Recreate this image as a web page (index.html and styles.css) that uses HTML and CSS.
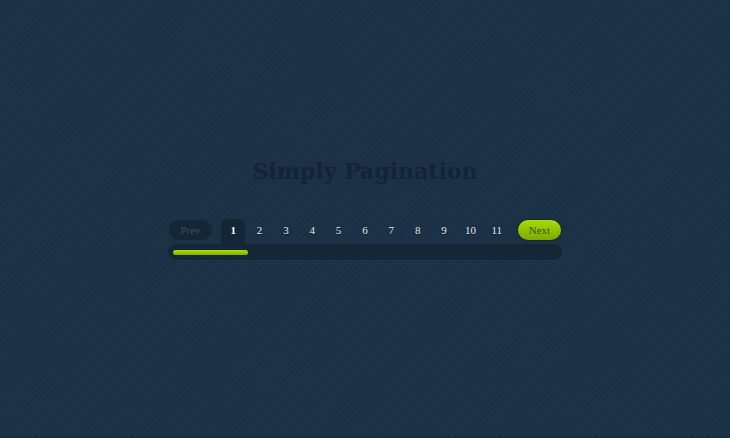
FILE: index.html
```html
<!DOCTYPE html>
<html lang="en">
<head>
<meta charset="utf-8">
<title>Simply Pagination</title>
<link rel="stylesheet" href="styles.css">
</head>
<body>
<main class="page">
  <h1 class="title">Simply Pagination</h1>
  <nav class="pagination" aria-label="Pagination">
    <div class="controls">
      <button class="step" type="button" disabled>Prev</button>
      <ol class="pages">
        <li><a class="current" href="#1" aria-current="page">1</a></li>
        <li><a href="#2">2</a></li>
        <li><a href="#3">3</a></li>
        <li><a href="#4">4</a></li>
        <li><a href="#5">5</a></li>
        <li><a href="#6">6</a></li>
        <li><a href="#7">7</a></li>
        <li><a href="#8">8</a></li>
        <li><a href="#9">9</a></li>
        <li><a href="#10">10</a></li>
        <li><a href="#11">11</a></li>
      </ol>
      <button class="step next" type="button">Next</button>
    </div>
    <div class="track"><div class="fill"></div></div>
  </nav>
</main>
</body>
</html>
```
FILE: styles.css
```css
* { box-sizing: border-box; }

body {
  margin: 0;
  background-color: #1b3145;
  background-image:
    repeating-linear-gradient(45deg, rgba(255, 255, 255, 0.012) 0 1px, transparent 1px 3px),
    repeating-linear-gradient(-45deg, rgba(0, 0, 0, 0.04) 0 1px, transparent 1px 4px);
  color: #e3edf3;
  font-family: "Liberation Serif", serif;
}

.page {
  display: flex;
  flex-direction: column;
  align-items: center;
  gap: 32px;
  min-height: 100vh;
  padding: 155px 16px 0;
  border-bottom: 1px solid #172a3c;
}

.title {
  margin: 0;
  color: #12233a;
  font-family: "DejaVu Serif", serif;
  font-size: 22px;
  line-height: 32px;
}

.pagination {
  width: 100%;
  max-width: 394px;
}

.controls {
  display: flex;
  align-items: flex-start;
  gap: 8px;
  padding: 0 1px;
}

.step {
  width: 43px;
  height: 20px;
  margin-top: 1px;
  padding: 0;
  border: 0;
  border-radius: 10px;
  background: #132736;
  color: #3b5060;
  font: 11px/20px "Liberation Serif", serif;
}

.next {
  background: linear-gradient(#a9dc05, #7ca900);
  box-shadow: 0 0 1px 1px rgba(10, 28, 35, 0.3);
  color: #34560b;
}

.pages {
  display: flex;
  flex: 1;
  margin: 0;
  padding: 0;
  list-style: none;
}

.pages li {
  flex: 1;
  padding: 0 1px;
}

.pages a {
  display: block;
  height: 25px;
  border-radius: 6px 6px 0 0;
  color: inherit;
  font-size: 11px;
  line-height: 23px;
  text-align: center;
  text-decoration: none;
  text-shadow: 0 1px 1px #0b1a26;
}

.pages .current {
  background: #132736;
  color: #fff;
  font-weight: bold;
}

.track {
  height: 16px;
  padding: 6px 5px;
  border-radius: 8px;
  background: #132736;
  box-shadow: 0 1px 0 #20364b;
}

.fill {
  width: 75px;
  height: 5px;
  border-radius: 3px;
  background: linear-gradient(#aadd06, #82b000);
}
```
